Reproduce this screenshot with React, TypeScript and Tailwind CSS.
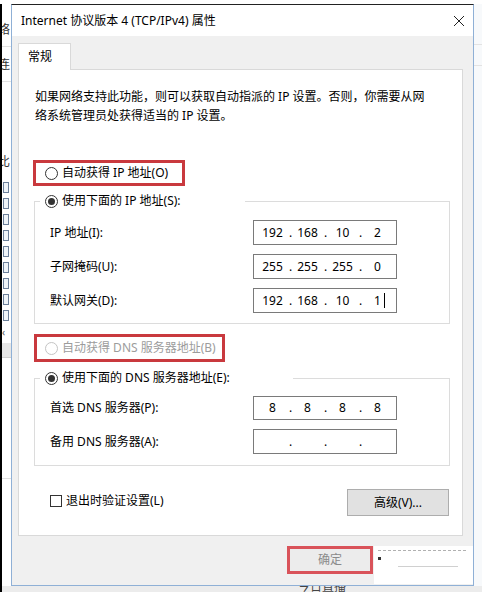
import { ReactNode } from 'react'

const font = { fontFamily: '"Noto Sans", "Noto Sans CJK SC", sans-serif' }

function Radio({ checked, disabled }: { checked?: boolean; disabled?: boolean }) {
  return (
    <span
      className={`flex h-[13px] w-[13px] shrink-0 items-center justify-center rounded-full border bg-white ${
        disabled ? 'border-[#c4c4c4]' : 'border-[#333333]'
      }`}
    >
      {checked && <span className="h-[7px] w-[7px] rounded-full bg-[#333333]" />}
    </span>
  )
}

function IpBox({ parts }: { parts: string[] }) {
  return (
    <div className="flex h-full w-[144px] items-center border border-[#7a7a7a] bg-white pl-[4px] text-[12px] text-black">
      {parts.map((p, i) => (
        <div key={i} className="flex items-center">
          <span className="w-[29px] text-center">{p}</span>
          {i < 3 && <span className="w-[6px] pl-[2px]">.</span>}
        </div>
      ))}
    </div>
  )
}

function Row({ label, children, h }: { label: string; children: ReactNode; h: string }) {
  return (
    <div className={`flex items-center ${h}`}>
      <span className="w-[203px] text-[12px] text-black">{label}</span>
      {children}
    </div>
  )
}

export default function App() {
  return (
    <div className="flex h-[592px] w-[482px] flex-col overflow-hidden bg-[#f3f3f3]" style={font}>
      <div className="h-[4px] shrink-0 bg-white" />
      <div className="flex h-[582px] shrink-0">
        {/* window behind, left edge */}
        <div className="flex w-[11px] shrink-0 flex-col overflow-hidden border-l-2 border-black bg-white text-[12px] leading-none text-[#333]">
          <span className="mt-[20px] -ml-[4px]">络</span>
          <div className="mt-[10px] h-px bg-[#e2e2e2]" />
          <span className="mt-[12px] -ml-[4px]">连</span>
          <div className="mt-[10px] h-px bg-[#e2e2e2]" />
          <span className="mt-[74px] -ml-[4px]">比</span>
          <div className="mt-[14px] flex flex-col gap-[5px] pl-[1px]">
            {Array.from({ length: 9 }).map((_, i) => (
              <span key={i} className="h-[11px] w-[6px] border border-[#6b7f99] bg-[#eef3f8]" />
            ))}
          </div>
          <span className="mt-[6px] text-[10px] text-[#555]">‹</span>
          <div className="mt-[6px] h-[14px] bg-[#e6e6e6]" />
          <div className="h-px bg-[#cfcfcf]" />
          <div className="mt-[120px] h-px bg-[#e0e0e0]" />
        </div>

        {/* dialog */}
        <div className="flex w-[463px] shrink-0 flex-col border-x border-b border-t border-x-[#8fb0d6] border-b-[#8fb0d6] border-t-[#222] bg-[#f0f0f0]">
          <div className="flex h-[31px] shrink-0 items-center justify-between bg-white pl-[9px] pr-[7px]">
            <span className="text-[12px] text-black">Internet 协议版本 4 (TCP/IPv4) 属性</span>
            <svg width="14" height="14" viewBox="0 0 14 14">
              <path d="M2 2L12 12M12 2L2 12" stroke="#222" strokeWidth="1" />
            </svg>
          </div>

          <div className="flex flex-col pl-[6px] pt-[7px]">
            <div className="relative z-10 -mb-px flex h-[27px] w-[53px] items-center border border-b-0 border-[#d9d9d9] bg-white pl-[9px] text-[12px] text-black">
              常规
            </div>
            <div className="flex h-[467px] w-[445px] flex-col border border-[#d9d9d9] bg-white">
              <p className="pl-[16px] pt-[17px] text-[12px] leading-[19px] text-black">
                如果网络支持此功能，则可以获取自动指派的 IP 设置。否则，你需要从网
                <br />
                络系统管理员处获得适当的 IP 设置。
              </p>

              <div className="ml-[14px] mt-[35px] flex h-[26px] w-[152px] items-center gap-[4px] border-[3px] border-[#c9393e] pl-[9px] text-[12px] text-black">
                <Radio />
                <span>自动获得 IP 地址(O)</span>
              </div>

              <fieldset className="ml-[15px] mt-[7px] w-[416px] border border-[#dcdcdc] px-0 pb-[10px]">
                <legend className="ml-[5px] flex h-[16px] w-[205px] items-center gap-[4px] bg-white pl-[5px] text-[12px] text-black">
                  <Radio checked />
                  <span>使用下面的 IP 地址(S):</span>
                </legend>
                <div className="mt-[11px] flex flex-col gap-[9px] pl-[15px]">
                  <Row label="IP 地址(I):" h="h-[25px]">
                    <IpBox parts={['192', '168', '10', '2']} />
                  </Row>
                  <Row label="子网掩码(U):" h="h-[25px]">
                    <IpBox parts={['255', '255', '255', '0']} />
                  </Row>
                  <Row label="默认网关(D):" h="h-[25px]">
                    <div className="relative h-full">
                      <IpBox parts={['192', '168', '10', '1']} />
                      <span className="absolute left-[131px] top-[5px] h-[15px] w-px bg-black" />
                    </div>
                  </Row>
                </div>
              </fieldset>

              <div className="ml-[15px] mt-[10px] flex h-[28px] w-[191px] items-center gap-[4px] border-[3px] border-[#c9393e] pl-[8px] text-[12px] text-[#9c9c9c]">
                <Radio disabled />
                <span>自动获得 DNS 服务器地址(B)</span>
              </div>

              <fieldset className="ml-[15px] mt-[8px] w-[416px] border border-[#dcdcdc] px-0 pb-[11px]">
                <legend className="ml-[5px] flex h-[16px] w-[253px] items-center gap-[4px] bg-white pl-[5px] text-[12px] text-black">
                  <Radio checked />
                  <span>使用下面的 DNS 服务器地址(E):</span>
                </legend>
                <div className="mt-[10px] flex flex-col gap-[9px] pl-[15px]">
                  <Row label="首选 DNS 服务器(P):" h="h-[24px]">
                    <IpBox parts={['8', '8', '8', '8']} />
                  </Row>
                  <Row label="备用 DNS 服务器(A):" h="h-[25px]">
                    <IpBox parts={['', '', '', '']} />
                  </Row>
                </div>
              </fieldset>

              <div className="ml-[31px] mt-[23px] flex w-[399px] items-start justify-between">
                <div className="mt-[3px] flex items-center gap-[4px] text-[12px] text-black">
                  <span className="h-[12px] w-[12px] border border-[#333333] bg-white" />
                  <span>退出时验证设置(L)</span>
                </div>
                <button className="flex h-[27px] w-[102px] items-center justify-center border border-[#adadad] bg-[#e1e1e1] text-[12px] text-black">
                  高级(V)...
                </button>
              </div>
            </div>
          </div>

          <div className="mt-[10px] flex items-start justify-end">
            <div className="flex h-[28px] w-[86px] items-center justify-center border-[3px] border-[#d9535a] bg-[#ececec] text-[12px] text-[#8a8a8a]">
              确定
            </div>
            <div className="ml-px flex h-[38px] w-[99px] flex-col gap-[6px] bg-white px-[4px] pt-[4px]">
              <div className="h-px w-[88px] border-t border-dashed border-[#b0b0b0]" />
              <div className="h-[3px] w-[3px] bg-[#333]" />
              <div className="ml-[20px] h-px w-[60px] bg-[#d0d0d0]" />
            </div>
          </div>
        </div>

        {/* window behind, right edge */}
        <div className="flex flex-1 flex-col bg-[#f7f9fb]">
          <div className="mt-[40px] h-px bg-[#e3e3e3]" />
          <div className="mt-[20px] h-px bg-[#e3e3e3]" />
        </div>
      </div>
      <div className="flex h-[6px] shrink-0 items-start overflow-hidden border-l-2 border-black bg-[#ececec]">
        <span className="ml-[296px] -mt-[8px] text-[12px] text-[#444]">今日直播</span>
      </div>
    </div>
  )
}
